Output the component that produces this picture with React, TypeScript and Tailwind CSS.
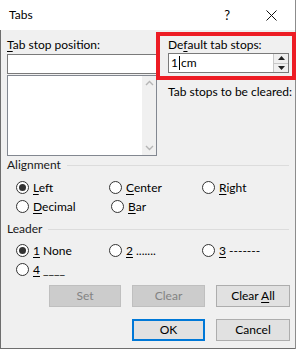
import * as React from "react";

const FONT = "font-['Segoe_UI',Lato,sans-serif]";

function Radio({ checked, children }: { checked?: boolean; children: React.ReactNode }) {
  return (
    <div className="flex h-[19px] w-[95px] items-center gap-[4px]">
      <span className="flex h-[13px] w-[13px] shrink-0 items-center justify-center rounded-full border border-[#333] bg-white">
        {checked && <span className="h-[7px] w-[7px] rounded-full bg-[#333]" />}
      </span>
      <span className="whitespace-pre leading-[16px]">{children}</span>
    </div>
  );
}

// Mnemonic letter (Alt+key underline).
const K = ({ c }: { c: string }) => <span className="underline underline-offset-[2px]">{c}</span>;

function GroupLabel({ text }: { text: string }) {
  return (
    <div className="flex h-[16px] items-center">
      <span className="leading-[16px] text-[#1a1a1a]">{text}</span>
      <span className="ml-[6px] mr-[6px] h-px flex-1 bg-[#dcdcdc]" />
    </div>
  );
}

function Btn({ w, disabled, primary, children }: { w: string; disabled?: boolean; primary?: boolean; children: React.ReactNode }) {
  const base = "flex h-[22px] items-center justify-center leading-[16px]";
  const look = disabled
    ? "border border-[#bfbfbf] bg-[#cccccc] text-[#838383]"
    : primary
      ? "border-2 border-[#0078d7] bg-[#e1e1e1] text-black"
      : "border border-[#adadad] bg-[#e1e1e1] text-black";
  return (
    <div className={`${base} ${look} ${w}`}>
      <span className="whitespace-pre">{children}</span>
    </div>
  );
}

export default function App() {
  return (
    <div className={`relative h-[350px] w-[298px] bg-white text-[12px] text-black ${FONT}`}>
      <div className="flex h-[349px] w-[296px] flex-col border-r border-[#8c8c8c]">
        {/* title bar */}
        <div className="flex h-[30px] shrink-0 items-center bg-white pl-[9px]">
          <span className="flex-1 leading-[16px]">Tabs</span>
          <span className="mr-[36px] text-[13px] leading-[16px]">?</span>
          <svg width="11" height="11" viewBox="0 0 11 11" className="mr-[18px]">
            <path d="M0.5 0.5 L10.5 10.5 M10.5 0.5 L0.5 10.5" stroke="#111" strokeWidth="1" />
          </svg>
        </div>

        {/* body */}
        <div className="flex flex-1 flex-col border-b border-l border-[#6e6e6e] bg-[#f0f0f0] pl-[6px]">
          <div className="flex">
            <div className="flex w-[150px] flex-col">
              <div className="mt-[7px] h-[16px] leading-[16px]"><K c="T" />ab stop position:</div>
              <div className="mt-[1px] h-[20px] border border-[#7a7a7a] bg-white" />
              <div className="mt-[1px] flex h-[81px] border border-[#828790] bg-white">
                <div className="flex-1" />
                <div className="flex w-[14px] flex-col items-center justify-between bg-[#f0f0f0] py-[4px]">
                  <svg width="9" height="6" viewBox="0 0 9 6"><path d="M1 5 L4.5 1.5 L8 5" fill="none" stroke="#b5b5b5" strokeWidth="1.4" /></svg>
                  <svg width="9" height="6" viewBox="0 0 9 6"><path d="M1 1 L4.5 4.5 L8 1" fill="none" stroke="#b5b5b5" strokeWidth="1.4" /></svg>
                </div>
              </div>
            </div>
            <div className="ml-[11px] flex w-[121px] flex-col">
              <div className="mt-[7px] h-[16px] leading-[16px]">De<K c="f" />ault tab stops:</div>
              <div className="flex h-[20px] border border-[#7a7a7a] bg-white">
                <div className="flex flex-1 items-center pl-[2px] leading-[16px]">
                  1<span className="mx-[1px] inline-block h-[14px] w-px bg-black" />cm
                </div>
                <div className="flex w-[15px] flex-col border-l border-[#c8c8c8] bg-[#f0f0f0]">
                  <div className="flex flex-1 items-center justify-center border-b border-[#c8c8c8]">
                    <svg width="7" height="4" viewBox="0 0 7 4"><path d="M0 4 L3.5 0 L7 4 Z" fill="#222" /></svg>
                  </div>
                  <div className="flex flex-1 items-center justify-center">
                    <svg width="7" height="4" viewBox="0 0 7 4"><path d="M0 0 L3.5 4 L7 0 Z" fill="#222" /></svg>
                  </div>
                </div>
              </div>
              <div className="mt-[11px] whitespace-nowrap leading-[16px]">Tab stops to be cleared:</div>
            </div>
          </div>

          {/* alignment */}
          <div className="mt-[1px]"><GroupLabel text="Alignment" /></div>
          <div className="ml-[9px] mt-[5px] flex flex-col">
            <div className="flex">
              <Radio checked><K c="L" />eft</Radio>
              <Radio><K c="C" />enter</Radio>
              <Radio><K c="R" />ight</Radio>
            </div>
            <div className="flex">
              <Radio><K c="D" />ecimal</Radio>
              <Radio><K c="B" />ar</Radio>
            </div>
          </div>

          {/* leader */}
          <div className="mt-[5px]"><GroupLabel text="Leader" /></div>
          <div className="ml-[9px] mt-[4px] flex flex-col">
            <div className="flex">
              <Radio checked><K c="1" /> None</Radio>
              <Radio><K c="2" /> .......</Radio>
              <Radio><K c="3" /> -------</Radio>
            </div>
            <div className="flex">
              <Radio><K c="4" /> ____</Radio>
            </div>
          </div>

          <div className="ml-[42px] mt-[6px] flex gap-[11px]">
            <Btn w="w-[72px]" disabled>Set</Btn>
            <Btn w="w-[73px]" disabled>Clear</Btn>
            <Btn w="w-[74px]">Clear <K c="A" />ll</Btn>
          </div>
          <div className="ml-[125px] mt-[12px] flex gap-[11px]">
            <Btn w="w-[73px]" primary>OK</Btn>
            <Btn w="w-[74px]">Cancel</Btn>
          </div>
        </div>
      </div>

      {/* red highlight drawn over the dialog */}
      <div className="absolute left-[156px] top-[32px] h-[48px] w-[140px] border-[4px] border-[#ed1c24]" />
    </div>
  );
}
